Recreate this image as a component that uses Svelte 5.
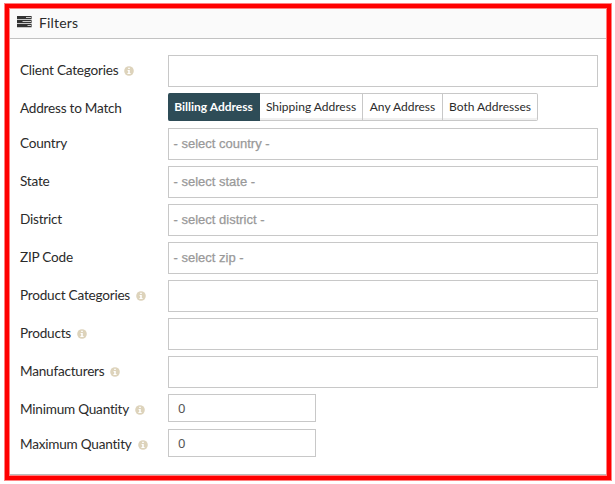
<script>
  const rows = [
    { label: 'Client Categories', info: true, kind: 'select', text: '' },
    { label: 'Address to Match', kind: 'buttons' },
    { label: 'Country', kind: 'select', text: '- select country -' },
    { label: 'State', kind: 'select', text: '- select state -' },
    { label: 'District', kind: 'select', text: '- select district -' },
    { label: 'ZIP Code', kind: 'select', text: '- select zip -' },
    { label: 'Product Categories', info: true, kind: 'select', text: '' },
    { label: 'Products', info: true, kind: 'select', text: '' },
    { label: 'Manufacturers', info: true, kind: 'select', text: '' },
    { label: 'Minimum Quantity', info: true, kind: 'number', text: '0' },
    { label: 'Maximum Quantity', info: true, kind: 'number', text: '0' }
  ];
  const options = [
    { name: 'Billing Address', cls: 'billing' },
    { name: 'Shipping Address', cls: 'shipping' },
    { name: 'Any Address', cls: 'any' },
    { name: 'Both Addresses', cls: 'both' }
  ];
  let active = $state(0);
</script>

<div class="outer">
  <div class="frame">
    <div class="panel">
      <header>
        <svg class="tasks" width="15" height="12" viewBox="0 0 15 12">
          <path fill="#333" d="M0 0h14.6v3.2H0zM0 4h14.6v3.2H0zM0 8h14.6v3.2H0z" />
          <path fill="#ccc" d="M9 1h5v1H9zM5.5 5H14v1H5.5zM10.5 9H14v1h-3.5z" />
        </svg>
        <span>Filters</span>
      </header>
      <div class="rows">
        {#each rows as row}
          <div class="row {row.kind}">
            <div class="label">
              <span>{row.label}</span>
              {#if row.info}
                <svg class="info" width="10" height="10" viewBox="0 0 10 10">
                  <circle cx="5" cy="5" r="4.8" fill="#ddd3bb" />
                  <path fill="#fff" d="M4.2 1.7h1.6V3H4.2zM3.6 3.9h2.2v3h.8v1.1H3.4V6.9h.8V5h-.6z" />
                </svg>
              {/if}
            </div>
            {#if row.kind === 'buttons'}
              <div class="group">
                {#each options as o, i}
                  <button class={o.cls} class:active={active === i} onclick={() => (active = i)}>{o.name}</button>
                {/each}
              </div>
            {:else}
              <div class="field">{row.text}</div>
            {/if}
          </div>
        {/each}
      </div>
    </div>
  </div>
</div>

<style>
  :global(body) {
    background: #fff;
  }
  .outer {
    box-sizing: border-box;
    width: 615px;
    height: 484px;
    padding: 3px 3px 3px 4px;
    overflow: hidden;
    font-family: Lato, sans-serif;
    color: #2b2b2b;
  }
  .frame {
    box-sizing: border-box;
    width: 608px;
    height: 478px;
    border: 1px solid #ff8080;
    background: #f00;
    padding: 4px;
  }
  .panel {
    box-sizing: border-box;
    height: 468px;
    border: 1px solid #ff8080;
    background: #fff;
    box-shadow: inset 0 -1px 0 #bbb;
  }
  header {
    box-sizing: border-box;
    height: 30px;
    display: flex;
    align-items: center;
    background: #fafafa;
    border-bottom: 1px solid #c2c2c2;
    padding: 0 0 2px 7px;
    font-size: 14px;
    letter-spacing: 0.15px;
  }
  header span {
    margin-left: 7px;
    line-height: 20px;
  }
  .tasks {
    display: block;
    margin-top: -2px;
  }
  .rows {
    padding: 16px 0 0 10px;
  }
  .row {
    display: flex;
    height: 38px;
  }
  .row.buttons,
  .row.number {
    height: 35px;
  }
  .label {
    width: 148px;
    height: 28px;
    display: flex;
    align-items: center;
    font-size: 13.6px;
    letter-spacing: -0.23px;
    white-space: nowrap;
  }
  .label span {
    padding-top: 2px;
    line-height: 16px;
  }
  .info {
    display: block;
    margin: 4px 0 0 6px;
  }
  .field {
    box-sizing: border-box;
    width: 430px;
    height: 32px;
    border: 1px solid #c8c8c8;
    padding-left: 4.5px;
    font: 13px/30px 'Liberation Sans', Arial, sans-serif;
    color: #999;
    -webkit-text-stroke: 0.25px #999;
  }
  .number .field {
    width: 148px;
    height: 28px;
    padding-left: 9px;
    font: 13px/27px 'Noto Sans', sans-serif;
    color: #555;
    -webkit-text-stroke: 0;
  }
  .group {
    display: flex;
    height: 28px;
  }
  button {
    box-sizing: border-box;
    height: 28px;
    margin: 0;
    padding: 0 0 1px;
    border: 1px solid #c8c8c8;
    border-left: 0;
    background: #fff;
    box-shadow: inset 0 -2px 0 #f0f0f0;
    font: 12px/24px Lato, sans-serif;
    color: #2b2b2b;
    white-space: nowrap;
  }
  .billing { width: 92px; border-radius: 2px 0 0 2px; }
  .shipping { width: 103px; }
  .any { width: 80px; }
  .both { width: 95px; border-radius: 0 2px 2px 0; }
  .active {
    background: #2e4c57;
    border-color: #2e4c57;
    box-shadow: none;
    color: #fff;
    font-weight: 700;
  }
</style>
